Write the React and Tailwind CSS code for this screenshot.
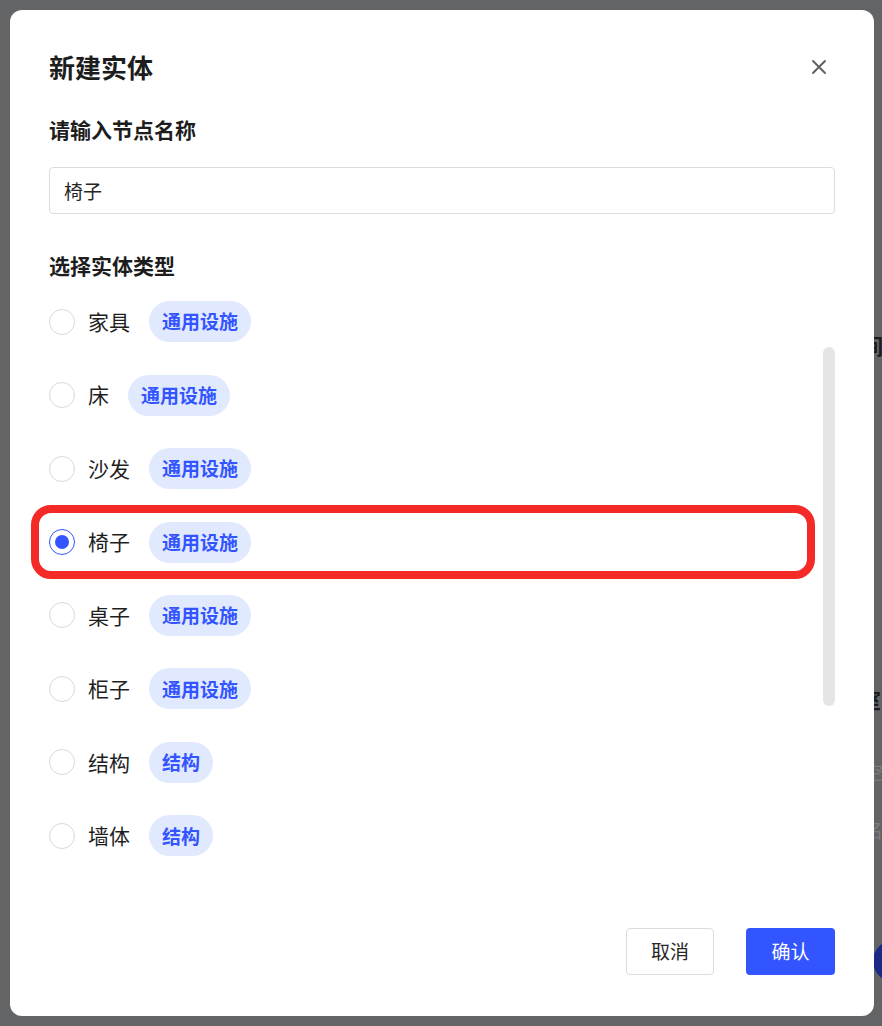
import React, { useState } from 'react';

const types = [
  { name: '家具', tag: '通用设施' },
  { name: '床', tag: '通用设施' },
  { name: '沙发', tag: '通用设施' },
  { name: '椅子', tag: '通用设施' },
  { name: '桌子', tag: '通用设施' },
  { name: '柜子', tag: '通用设施' },
  { name: '结构', tag: '结构' },
  { name: '墙体', tag: '结构' },
];

const font = { fontFamily: '"Noto Sans CJK SC", "Noto Sans", sans-serif' };

const CloseIcon = () => (
  <svg width="16" height="16" viewBox="0 0 16 16" fill="none">
    <path d="M2 2L14 14M14 2L2 14" stroke="#5f5f5f" strokeWidth="1.9" strokeLinecap="round" />
  </svg>
);

const Radio = ({ checked }) =>
  checked ? (
    <span className="w-[26px] h-[26px] shrink-0 rounded-full border-[1.5px] border-[#3355ff] flex items-center justify-center">
      <span className="w-[14px] h-[14px] rounded-full bg-[#3355ff]" />
    </span>
  ) : (
    <span className="w-[26px] h-[26px] shrink-0 rounded-full border border-[#d9d9d9] bg-white" />
  );

export default function App() {
  const [nombre, setNombre] = useState('椅子');
  const [seleccion, setSeleccion] = useState('椅子');

  return (
    <div className="relative w-[882px] h-[1026px] overflow-hidden bg-[#636466] pl-[10px] pt-[10px] pb-[10px] pr-[8px]" style={font}>
      {/* page behind the overlay */}
      <span className="absolute left-[862px] top-[330px] text-[21px] font-bold text-[#1c1c1c]">间</span>
      <span className="absolute left-[860px] top-[684px] text-[21px] font-bold text-[#1c1c1c]">室</span>
      <span className="absolute left-[864px] top-[758px] text-[19px] text-[#7c7d80]">空</span>
      <span className="absolute left-[864px] top-[816px] text-[19px] text-[#7c7d80]">名</span>
      <span className="absolute left-[873px] top-[940px] w-[44px] h-[42px] rounded-full bg-[#1b2a87]" />

      <div className="relative z-10 h-full bg-white rounded-[12px] flex flex-col pt-10 pb-[41px] pl-[39px] pr-[39px]">
        <div className="flex items-center justify-between h-[34px]">
          <h2 className="text-[26px] font-semibold text-[#1d1d1d] leading-none">新建实体</h2>
          <button className="mr-[8px] w-[16px] h-[16px] flex items-center justify-center">
            <CloseIcon />
          </button>
        </div>

        <label htmlFor="node-name" className="mt-[30px] h-[30px] leading-[30px] text-[21px] font-semibold text-[#1d1d1d]">
          请输入节点名称
        </label>
        <input
          id="node-name"
          value={nombre}
          onChange={(e) => setNombre(e.target.value)}
          className="mt-[23px] h-[47px] w-full px-[14px] rounded-[4px] border border-[#dcdcdc] text-[19px] text-[#262626] outline-none"
        />

        <div className="mt-[36px] h-[30px] leading-[30px] text-[21px] font-semibold text-[#1d1d1d]">
          选择实体类型
        </div>

        <div className="relative flex-1 mt-[5px]">
          {types.map((t) => (
            <div
              key={t.name}
              onClick={() => setSeleccion(t.name)}
              className="relative h-[73.45px] flex items-center cursor-pointer"
            >
              <Radio checked={seleccion === t.name} />
              <span className="ml-[13px] text-[21px] text-[#1f1f1f]">{t.name}</span>
              <span className="ml-[19px] h-[41px] px-[13px] flex items-center rounded-full bg-[#e1e9ff] text-[19px] font-semibold text-[#3355ff]">
                {t.tag}
              </span>
              {t.name === '椅子' && (
                <span className="absolute top-0 bottom-0 -left-[18px] right-[20px] border-[8px] border-[#f42a26] rounded-[20px] pointer-events-none" />
              )}
            </div>
          ))}
          {/* scroll thumb */}
          <span className="absolute right-0 top-[62px] w-[12px] h-[359px] rounded-full bg-[#e5e5e5]" />
        </div>

        <div className="flex justify-end gap-[32px]">
          <button className="w-[88px] h-[47px] rounded-[4px] border border-[#dcdcdc] bg-white text-[19px] text-[#262626]">
            取消
          </button>
          <button className="w-[89px] h-[47px] rounded-[4px] bg-[#3355ff] text-[19px] text-white">
            确认
          </button>
        </div>
      </div>
    </div>
  );
}
